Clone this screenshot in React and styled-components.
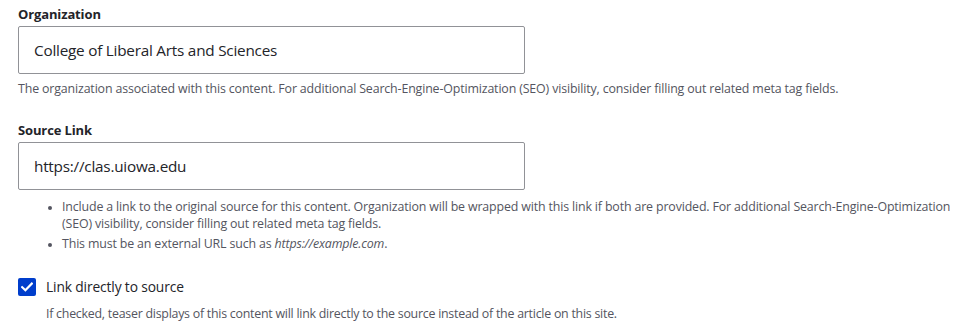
import React from 'react';
import styled, { createGlobalStyle } from 'styled-components';

const GlobalStyle = createGlobalStyle`
    body {
        margin: 0;
        background: #ffffff;
        font-family: 'Segoe UI', 'Open Sans', 'Noto Sans', sans-serif;
        color: #232429;
    }
`;

const StyledForm = styled.div`
    padding: 5px 6px 0 18px;
    width: 960px;
    box-sizing: border-box;
`;

const StyledItem = styled.div`
    margin-top: ${props => props.gap || 0}px;
`;

const StyledLabel = styled.label`
    display: block;
    font-size: 13px;
    font-weight: 700;
    line-height: 18px;
    letter-spacing: -0.01em;
    margin-bottom: 3px;
    color: #232429;
`;

const StyledInput = styled.input`
    display: block;
    box-sizing: border-box;
    width: 507px;
    height: 48px;
    padding: 0 15px;
    border: 1px solid #919297;
    border-radius: 2px;
    font-family: inherit;
    font-size: 15.3px;
    letter-spacing: -0.015em;
    color: #232429;
    background: #ffffff;
    outline: none;
`;

const StyledDesc = styled.div`
    margin-top: ${props => props.top || 6}px;
    margin-left: ${props => props.indent || 0}px;
    font-size: 12.4px;
    line-height: 18px;
    letter-spacing: ${props => props.tight ? '-0.02em' : '-0.012em'};
    color: #545560;
    i {
        font-style: italic;
    }
`;

const StyledList = styled.ul`
    margin: 8px 0 0 0;
    padding: 0 0 0 44px;
    font-size: 12.4px;
    line-height: 17px;
    letter-spacing: -0.012em;
    color: #545560;
    li {
        margin-bottom: 3px;
        padding-left: 0;
    }
    li::marker {
        font-size: 10px;
    }
`;

const StyledCheckRow = styled.div`
    display: flex;
    align-items: center;
    gap: 10px;
    margin-top: 26px;
`;

const StyledBox = styled.span`
    width: 18px;
    height: 18px;
    border-radius: 2px;
    background: #003ecc;
    display: flex;
    align-items: center;
    justify-content: center;
    flex-shrink: 0;
`;

const StyledCheckText = styled.span`
    font-size: 13.8px;
    line-height: 18px;
    letter-spacing: -0.01em;
    color: #232429;
`;

const Checkbox = () => (
    <StyledBox>
        <svg width="12" height="10" viewBox="0 0 12 10">
            <path d="M1.2 5.2 L4.4 8.3 L10.8 1.6" fill="none" stroke="#ffffff" strokeWidth="2.2" strokeLinecap="square" />
        </svg>
    </StyledBox>
);

const App = () => {
    return (
        <>
            <GlobalStyle />
            <StyledForm>
                <StyledItem>
                    <StyledLabel>Organization</StyledLabel>
                    <StyledInput readOnly value="College of Liberal Arts and Sciences" />
                    <StyledDesc>
                        The organization associated with this content. For additional Search-Engine-Optimization (SEO) visibility, consider filling out related meta tag fields.
                    </StyledDesc>
                </StyledItem>
                <StyledItem gap={23}>
                    <StyledLabel>Source Link</StyledLabel>
                    <StyledInput readOnly value="https://clas.uiowa.edu" />
                    <StyledList>
                        <li>Include a link to the original source for this content. Organization will be wrapped with this link if both are provided. For additional Search-Engine-Optimization (SEO) visibility, consider filling out related meta tag fields.</li>
                        <li>This must be an external URL such as <i>https://example.com</i>.</li>
                    </StyledList>
                </StyledItem>
                <StyledCheckRow>
                    <Checkbox />
                    <StyledCheckText>Link directly to source</StyledCheckText>
                </StyledCheckRow>
                <StyledDesc top={9} indent={28} tight>
                    If checked, teaser displays of this content will link directly to the source instead of the article on this site.
                </StyledDesc>
            </StyledForm>
        </>
    );
};

export default App;
